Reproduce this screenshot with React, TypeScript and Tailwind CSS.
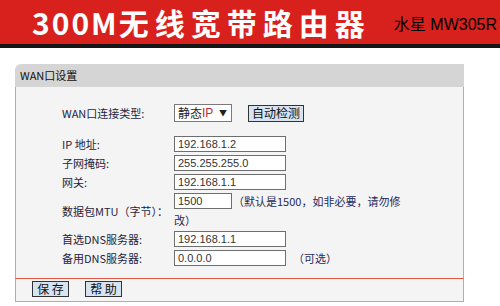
import React from "react";

const cjk = "font-['Noto_Sans_CJK_SC',sans-serif]";
const lat = "font-['Liberation_Sans','Noto_Sans_CJK_SC',sans-serif]";

function Field({ value, w = "w-[112px]" }: { value: string; w?: string }) {
  return (
    <input
      readOnly
      value={value}
      className={`${w} h-[16px] border border-[#6e6e6e] bg-white px-[3px] text-[11px] leading-[14px] text-[#333] ${lat} outline-none`}
    />
  );
}

function Row({ label, children, h = "h-[19px]" }: { label: string; children: React.ReactNode; h?: string }) {
  return (
    <div className={`flex ${h}`}>
      <div className={`w-[112px] flex items-start pt-[1px] text-[11px] leading-[14px] text-[#1e2440] ${cjk}`}>{label}</div>
      <div className="flex items-start">{children}</div>
    </div>
  );
}

export default function App() {
  return (
    <div className="w-[500px] h-[306px] bg-white overflow-hidden">
      <div className="h-[44px] bg-[#d8211d] flex items-center">
        <div className={`ml-[32px] text-white font-bold text-[30px] leading-none ${cjk} flex items-center`}>
          <span className="tracking-[2px]">300M</span>
          <span className="tracking-[6px]">无线宽带路由器</span>
        </div>
        <div className={`ml-auto mr-[3px] mt-[6px] text-[16px] text-black ${lat}`}>水星 MW305R</div>
      </div>
      <div className="h-[4px] bg-[#151515]" />
      <div className="ml-[15px] mt-[16px] w-[449px]">
        <div className={`h-[23px] bg-[#d5d5d5] rounded-tl-[6px] flex items-center pl-[5px] text-[11px] text-[#111] ${cjk}`}>
          WAN口设置
        </div>
        <div className="h-[191px] border-x border-[#c9a3a3] bg-[#f4f4f4] pl-[46px] pt-[17px]">
          <div className="flex h-[18px] items-center">
            <div className={`w-[112px] text-[11px] text-[#1e2440] ${cjk}`}>WAN口连接类型:</div>
            <div className={`w-[58px] h-[18px] border border-[#7a7a7a] bg-white flex items-center pl-[3px] pr-[4px] text-[12px] ${cjk}`}>
              <span className="text-[#222]">静态</span>
              <span className={`text-[#b03030] ${lat}`}>IP</span>
              <span className="ml-auto text-[8px] text-[#222]">▼</span>
            </div>
            <div className={`ml-[16px] w-[56px] h-[17px] border border-[#333] bg-[#d6e3f0] flex items-center justify-center text-[12px] text-[#111] ${cjk}`}>
              自动检测
            </div>
          </div>
          <div className="mt-[14px]">
            <Row label="IP 地址:"><Field value="192.168.1.2" /></Row>
            <Row label="子网掩码:"><Field value="255.255.255.0" /></Row>
            <Row label="网关:"><Field value="192.168.1.1" /></Row>
            <div className="flex h-[38px]">
              <div className={`w-[112px] flex items-center pb-[2px] text-[11px] text-[#1e2440] ${cjk}`}>数据包MTU（字节）：</div>
              <div className="flex flex-col">
                <div className="flex items-start">
                  <Field value="1500" w="w-[58px]" />
                  <span className={`ml-[1px] text-[11px] leading-[16px] text-[#1e2a5a] ${cjk}`}>（默认是1500，如非必要，请勿修</span>
                </div>
                <div className={`mt-[3px] text-[11px] leading-[16px] text-[#1e2a5a] ${cjk}`}>改）</div>
              </div>
            </div>
            <Row label="首选DNS服务器:"><Field value="192.168.1.1" /></Row>
            <Row label="备用DNS服务器:">
              <Field value="0.0.0.0" />
              <span className={`ml-[7px] text-[11px] leading-[16px] text-[#1e2a5a] ${cjk}`}>（可选）</span>
            </Row>
          </div>
        </div>
        <div className="h-[24px] border border-[#c9a3a3] border-t-[#e2583e] bg-[#f4f4f4] flex items-start pt-[2px] pl-[16px] gap-[16px]">
          <div className={`w-[37px] h-[16px] border border-[#333] bg-[#d6e3f0] flex items-center justify-center text-[12px] text-[#111] ${cjk}`}>保 存</div>
          <div className={`w-[37px] h-[16px] border border-[#333] bg-[#d6e3f0] flex items-center justify-center text-[12px] text-[#111] ${cjk}`}>帮 助</div>
        </div>
      </div>
    </div>
  );
}
